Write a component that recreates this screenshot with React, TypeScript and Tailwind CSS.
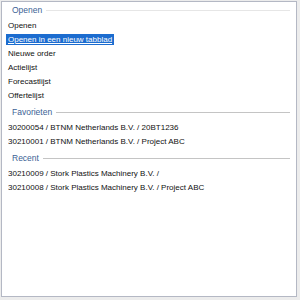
const groups = [
  {
    title: 'Openen',
    line: 'bg-[#e6e6e6]',
    first: true,
    items: ['Openen', 'Openen in een nieuw tabblad', 'Nieuwe order', 'Actielijst', 'Forecastlijst', 'Offertelijst'],
  },
  {
    title: 'Favorieten',
    line: 'bg-[#c4c4c4]',
    first: false,
    items: ['30200054 / BTNM Netherlands B.V. / 20BT1236', '30210001 / BTNM Netherlands B.V. / Project ABC'],
  },
  {
    title: 'Recent',
    line: 'bg-[#c4c4c4]',
    first: false,
    items: ['30210009 / Stork Plastics Machinery B.V. /', '30210008 / Stork Plastics Machinery B.V. / Project ABC'],
  },
];

export default function App() {
  return (
    <div className="w-[300px] h-[300px] bg-[#ececec] pl-px pt-px pr-[3px] pb-[3px]">
      <div
        className="h-full border border-[#b4b8c4] bg-white pr-[6px] text-[#111]"
        style={{ fontFamily: '"Liberation Sans", Arial, sans-serif' }}
      >
        {groups.map((g) => (
          <div key={g.title}>
            {/* section header with rule */}
            <div className={`flex items-center pl-[10px] ${g.first ? 'h-[16px]' : 'mt-[3px] h-[15px]'}`}>
              <span className="text-[8.5px] leading-none text-[#3b5f95]">{g.title}</span>
              <div className={`ml-[4px] h-px flex-1 ${g.line}`} />
            </div>
            {g.items.map((item) => {
              const active = item === 'Openen in een nieuw tabblad';
              return (
                <div key={item} className="flex h-[14px] items-center pl-[4px]">
                  <span
                    className={`px-[2px] text-[8px] leading-[11px] whitespace-nowrap ${
                      active ? 'bg-[#1c6ccf] text-white underline' : ''
                    }`}
                  >
                    {item}
                  </span>
                </div>
              );
            })}
          </div>
        ))}
      </div>
    </div>
  );
}
